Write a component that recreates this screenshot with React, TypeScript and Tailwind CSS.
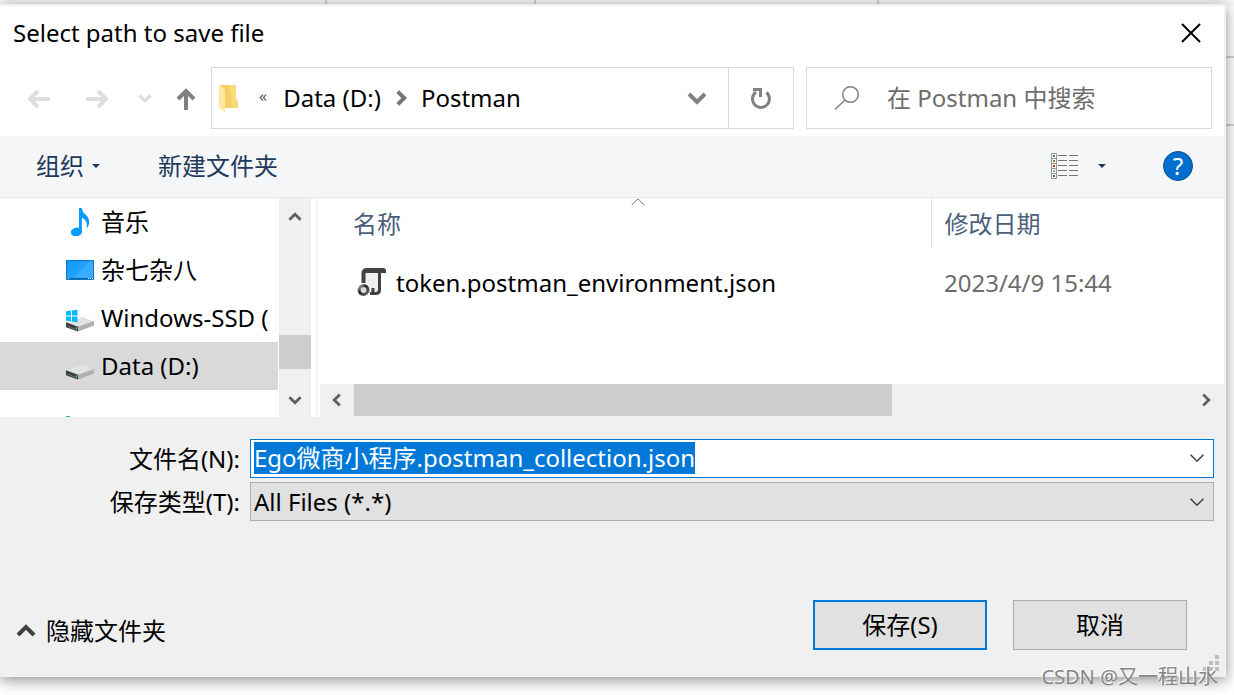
import { useEffect, useRef } from "react";

const places = [
  { name: "音乐", icon: <MusicIcon /> },
  { name: "杂七杂八", icon: <DesktopIcon /> },
  { name: "Windows-SSD (", icon: <DriveIcon system /> },
  { name: "Data (D:)", icon: <DriveIcon />, active: true },
];

function MusicIcon() {
  return (
    <svg className="h-7 w-7" viewBox="0 0 28 28" fill="#0a9bfb">
      <ellipse cx="10.500" cy="24" rx="5.700" ry="4.300" transform="rotate(-12 10.500 24)" />
      <path d="M13 0h2.800c.2 3.200 2 5 4.200 7.100 3.600 3.500 4.300 8.300 1.400 12.700l-.9-.4c1.200-4.500-.6-7.900-4.600-9.700v14H13z" />
    </svg>
  );
}

function DesktopIcon() {
  return (
    <svg className="h-7 w-7" viewBox="0 0 28 28">
      <defs>
        <linearGradient id="desk" x1="0" y1="0" x2="1" y2="1">
          <stop offset="0" stopColor="#0e98fb" />
          <stop offset="1" stopColor="#32aaff" />
        </linearGradient>
      </defs>
      <path d="M.5 4.500h27v19H.5z" fill="url(#desk)" stroke="#0877c4" />
      <path d="M7 22 24 5h3v17z" fill="#5abaff" opacity=".35" />
      <path d="M1 22h26v1H1z" fill="#0765a8" />
      <path d="M2 22h1v1H2zM22 22h1v1h-1zM24 22h1v1h-1zM26 22h1v1h-1z" fill="#fff" />
    </svg>
  );
}

function DriveIcon({ system }: { system?: boolean }) {
  return (
    <svg className="h-7 w-7" viewBox="0 0 28 28">
      <path d="M0 18.500 17 13l11 4.500-16 6z" fill="#e1e2e4" />
      <path d="M12 22.800 28 17v4.500l-16 6z" fill="#b0b0b2" />
      <path d="M0 18.300 12 22.800v4.700L0 23.200z" fill="#3a3d3d" />
      <path d="m1 22 10 3.800" stroke="#6c6e6e" strokeWidth="1" />
      <circle cx="10.500" cy="24.300" r="1" fill="#32d03c" />
      {system && (
        <path
          d="M0 7.300 5 6.600V11.500H0zM6 6.500 11.500 5.700V11.500H6zM0 12.500H5V17.300L0 16.700zM6 12.500H11.500V18.200L6 17.400z"
          fill="#00bcf2"
        />
      )}
    </svg>
  );
}

function JsonIcon() {
  return (
    <svg className="h-8 w-8" viewBox="0 0 32 32" fill="none">
      <defs>
        <linearGradient id="gear" x1="0" y1="0" x2="1" y2="1">
          <stop offset="0" stopColor="#b5b5b5" />
          <stop offset=".4" stopColor="#222" />
          <stop offset="1" stopColor="#6b6b6b" />
        </linearGradient>
      </defs>
      <path d="M8 4h15v22H8z" fill="#efeff0" />
      <path d="M6.500 16V6.500Q6.500 3 10 3h14" stroke="#414141" strokeWidth="4" />
      <path d="M9 1h17q3 0 3 3v2H9z" fill="#414141" />
      <path d="M22.500 5v18q0 3.500-4 3.500h-4M16 21v3.500q0 2-3 2" stroke="#414141" strokeWidth="3" />
      <circle cx="6.500" cy="23" r="4.500" fill="#d8d8d8" stroke="url(#gear)" strokeWidth="3" />
    </svg>
  );
}

function Chevron({ className, d, width = 3 }: { className: string; d: string; width?: number }) {
  return (
    <svg className={className} viewBox="0 0 20 20" fill="none" stroke="currentColor" strokeWidth={width}>
      <path d={d} />
    </svg>
  );
}

const DOWN = "m2 6 8 8 8-8";
const UP = "m2 14 8-8 8 8";
const LEFT = "m14 2-8 8 8 8";
const RIGHT = "m6 2 8 8-8 8";

function NavigationBar() {
  return (
    <nav className="flex h-[62px] items-stretch pr-3">
      <div className="flex w-[211px] shrink-0 items-center text-[#dedede]">
        <button type="button" aria-label="Back" className="ml-7 w-[58px]" disabled>
          <svg className="h-[22px] w-[22px]" viewBox="0 0 22 22" fill="none" stroke="currentColor" strokeWidth="4">
            <path d="M22 12H3M10 4l-8 8 8 8" />
          </svg>
        </button>
        <button type="button" aria-label="Forward" className="w-[52px]" disabled>
          <svg className="h-[22px] w-[22px]" viewBox="0 0 22 22" fill="none" stroke="currentColor" strokeWidth="4">
            <path d="M0 12h19M12 4l8 8-8 8" />
          </svg>
        </button>
        <button type="button" aria-label="Recent locations" className="w-[38px]" disabled>
          <Chevron className="h-[14px] w-[14px]" d={DOWN} width={5} />
        </button>
        <button type="button" aria-label="Up" className="text-[#808080]">
          <svg className="h-6 w-5" viewBox="0 0 20 24" fill="none" stroke="currentColor" strokeWidth="4">
            <path d="M10 24V5M2 13l8-8 8 8" />
          </svg>
        </button>
      </div>

      <div className="flex min-w-0 flex-1 items-stretch border border-[#d9d9d9]">
        <div className="flex min-w-0 flex-1 items-center">
          <svg className="ml-[7px] h-7 w-5 shrink-0" viewBox="0 0 20 28">
            <path d="M1 1h16v14l2 2v7H6z" fill="#f6cf67" />
            <path d="M11 1h6v14l2 2v7h-6z" fill="#fadb7c" />
            <path d="m0 1 6 5v22l-6-4z" fill="#ffe8a2" />
          </svg>
          <button type="button" aria-label="Parent folders" className="ml-5 pb-1 text-base text-[#555]">
            «
          </button>
          <button type="button" className="ml-4">Data (D:)</button>
          <Chevron className="ml-3 h-4 w-4 shrink-0 text-[#757575]" d={RIGHT} width={5} />
          <button type="button" className="ml-3">Postman</button>
          <button type="button" aria-label="Previous locations" className="mr-[21px] ml-auto text-[#808080]">
            <Chevron className="h-5 w-5" d={DOWN} width={4} />
          </button>
        </div>
        <button
          type="button"
          aria-label="Refresh"
          className="flex w-[65px] items-center justify-center border-l border-[#d9d9d9] text-[#808080]"
        >
          <svg className="h-6 w-6" viewBox="0 0 24 24" fill="none" stroke="currentColor" strokeWidth="3">
            <path d="M17.500 6.500a8.500 8.500 0 1 1-10.500-.5" />
            <path d="M4 2h9v9h-3V5H4z" fill="currentColor" stroke="none" />
          </svg>
        </button>
      </div>

      <label className="ml-3 flex w-[406px] items-center border border-[#d9d9d9] pl-7">
        <svg className="h-6 w-6 shrink-0" viewBox="0 0 24 24" fill="none" stroke="#808080" strokeWidth="1.500">
          <circle cx="15.500" cy="8.500" r="7.800" />
          <path d="M10 14 0 23.500" />
        </svg>
        <input
          type="search"
          aria-label="搜索"
          placeholder="在 Postman 中搜索"
          className="ml-7 min-w-0 flex-1 outline-none placeholder:text-[#6d6d6d]"
        />
      </label>
    </nav>
  );
}

function Toolbar() {
  return (
    <div className="mt-[7px] flex h-[62px] items-center border-b border-[#e8e8e8] bg-[#f4f6f8] pr-[31px] pb-px pl-9 text-[#1e395b]">
      <button type="button" className="flex items-center gap-2">
        组织
        <svg className="h-1 w-2" viewBox="0 0 8 4" fill="currentColor">
          <path d="M0 0h8L4 4z" />
        </svg>
      </button>
      <button type="button" className="ml-[58px]">新建文件夹</button>
      <button type="button" aria-label="Change view" className="ml-auto">
        <svg className="h-7 w-7" viewBox="0 0 28 28">
          <path d="M.5 1.500h5v25h-5zM.5 6.500h5M.5 11.500h5M.5 16.500h5M.5 21.500h5" fill="#fff" stroke="#949494" />
          <path d="M7 3.500h9M18 3.500h9M7 8.500h9M18 8.500h9M7 13.500h9M18 13.500h9M7 18.500h9M18 18.500h9M7 23.500h9M18 23.500h9" stroke="#777" />
          <path d="M2 3h2v2H2z" fill="#3e7187" />
          <path d="M2 8h2v2H2z" fill="#797a36" />
          <path d="M2 13h2v2H2z" fill="#b8321b" />
          <path d="M2 18h2v2H2z" fill="#8fa5a2" />
          <path d="M2 23h2v2H2z" fill="#376a95" />
        </svg>
      </button>
      <button type="button" aria-label="View options" className="ml-[19px]">
        <svg className="h-1 w-2" viewBox="0 0 8 4" fill="currentColor">
          <path d="M0 0h8L4 4z" />
        </svg>
      </button>
      <button
        type="button"
        aria-label="Help"
        className="ml-[57px] flex h-[30px] w-[30px] items-center justify-center rounded-full border border-[#0b4d86] bg-[#006fcf] text-2xl text-white"
      >
        ?
      </button>
    </div>
  );
}

function PlacesPane() {
  return (
    <aside className="flex w-[311px] shrink-0">
      <ul className="min-w-0 flex-1 overflow-hidden">
        {places.map((place) => (
          <li key={place.name} className={place.active ? "bg-[#d9d9d9]" : ""}>
            <button type="button" className="flex h-12 items-center gap-[7px] pl-[66px] whitespace-nowrap">
              <span className="shrink-0">{place.icon}</span>
              {place.name}
            </button>
          </li>
        ))}
        <li className="flex h-[27px] items-end pl-[66px]">
          <span className="h-px w-1 bg-[#3fa3b5]" />
        </li>
      </ul>
      <div className="ml-px flex w-8 flex-col items-center bg-[#f0f0f0] text-[#606060]">
        <button type="button" aria-label="Scroll up" className="flex h-[38px] items-center">
          <Chevron className="h-[14px] w-[14px]" d={UP} width={4} />
        </button>
        <div className="mt-[99px] h-[34px] w-full bg-[#cdcdcd]" />
        <button type="button" aria-label="Scroll down" className="mt-auto flex h-[34px] items-center">
          <Chevron className="h-[14px] w-[14px]" d={DOWN} width={4} />
        </button>
      </div>
    </aside>
  );
}

function FilePane() {
  return (
    <section className="ml-[5px] flex min-w-0 flex-1 flex-col border-l-2 border-[#f5f5f5] pl-0.5">
      <table className="w-full table-fixed text-left">
        <thead>
          <tr className="h-[51px] text-[#4c607a]">
            <th className="relative border-r border-[#e5e5e5] pl-[33px] font-normal">
              名称
              <Chevron className="absolute -top-1 left-[310px] h-4 w-4 text-[#555]" d={UP} width={1} />
            </th>
            <th className="w-[293px] pl-[13px] font-normal">修改日期</th>
          </tr>
        </thead>
        <tbody>
          <tr className="h-[68px]">
            <td className="pl-[37px]">
              <span className="flex items-center gap-[7px]">
                <span className="shrink-0"><JsonIcon /></span>
                token.postman_environment.json
              </span>
            </td>
            <td className="pl-[13px] text-[#6d6d6d]">2023/4/9 15:44</td>
          </tr>
        </tbody>
      </table>
      <div className="mt-auto flex h-[33px] items-center bg-[#f0f0f0] pb-px text-[#606060]">
        <button type="button" aria-label="Scroll left" className="flex w-[34px] justify-center">
          <Chevron className="h-[14px] w-[14px]" d={LEFT} width={4} />
        </button>
        <div className="h-full w-[538px] bg-[#cdcdcd]" />
        <button type="button" aria-label="Scroll right" className="ml-auto flex w-9 justify-center">
          <Chevron className="h-[14px] w-[14px]" d={RIGHT} width={4} />
        </button>
      </div>
    </section>
  );
}

function SaveForm() {
  const nameRef = useRef<HTMLInputElement>(null);

  useEffect(() => {
    nameRef.current?.focus();
    nameRef.current?.select();
  }, []);

  return (
    <form className="bg-[#f0f0f0] pt-[22px]" onSubmit={(event) => event.preventDefault()}>
      <div className="grid grid-cols-[240px_1fr] items-center gap-x-[10px] gap-y-1 pr-[10px]">
        <label htmlFor="file-name" className="text-right">文件名(N):</label>
        <div className="flex h-[39px] items-center border border-[#0078d7] bg-white pr-2 pb-px pl-[3px]">
          <input
            id="file-name"
            ref={nameRef}
            type="text"
            defaultValue="Ego微商小程序.postman_collection.json"
            className="h-8 min-w-0 flex-1 leading-8 outline-none selection:bg-[#0078d7] selection:text-white"
          />
          <Chevron className="h-4 w-4 text-[#444]" d={DOWN} width={2} />
        </div>
        <label htmlFor="file-type" className="text-right">保存类型(T):</label>
        <div className="flex h-[39px] items-center border border-[#adadad] bg-[#e1e1e1] pr-2 pl-[3px]">
          <select id="file-type" className="min-w-0 flex-1 appearance-none outline-none">
            <option>All Files (*.*)</option>
          </select>
          <Chevron className="h-4 w-4 text-[#444]" d={DOWN} width={2} />
        </div>
      </div>

      <div className="mt-[79px] flex items-center pr-[37px] pb-[27px] pl-4">
        <button type="button" className="mt-[11px] flex items-center gap-[10px]">
          <Chevron className="h-5 w-5 text-[#404040]" d={UP} width={4} />
          隐藏文件夹
        </button>
        <button type="submit" className="ml-auto h-[50px] w-[174px] border-2 border-[#0078d7] bg-[#e1e1e1]">
          保存(S)
        </button>
        <button type="button" className="ml-[26px] h-[50px] w-[174px] border border-[#adadad] bg-[#e1e1e1]">
          取消
        </button>
      </div>
    </form>
  );
}

// Edges of the sheet that stays visible behind the dialog
function Backdrop() {
  return (
    <div aria-hidden="true" className="absolute inset-0">
      <div className="flex h-1.5 bg-[#f7f7f7]">
        <div className="w-[327px] border-r-2 border-[#d0d0d0]" />
        <div className="w-[209px] border-r-2 border-[#d0d0d0]" />
        <div className="w-[343px] border-r-2 border-[#d0d0d0]" />
      </div>
      <div className="ml-auto h-[52px] w-2 border-b-2 border-[#d0d0d0]" />
      <div className="ml-auto h-[68px] w-2 border-b-2 border-[#d0d0d0]" />
    </div>
  );
}

export default function App() {
  return (
    <main className="relative min-h-screen overflow-hidden bg-white pt-1 pr-2 pb-[18px] font-['Noto_Sans','Noto_Sans_CJK_SC',sans-serif] text-2xl text-black">
      <Backdrop />
      <div role="dialog" aria-labelledby="dialog-title" className="relative border-t-2 border-r-2 border-[#f0f0f0] bg-white shadow-[0_3px_14px_0px_rgba(0,0,0,0.45)]">
        <header className="flex h-[61px] items-center justify-between pr-[23px] pb-2 pl-[13px]">
          <h1 id="dialog-title">Select path to save file</h1>
          <button type="button" aria-label="Close">
            <svg className="h-5 w-5" viewBox="0 0 20 20" stroke="#000" strokeWidth="2">
              <path d="m1 1 18 18M19 1 1 19" />
            </svg>
          </button>
        </header>
        <NavigationBar />
        <Toolbar />
        <div className="flex h-[219px]">
          <PlacesPane />
          <FilePane />
        </div>
        <SaveForm />
        <svg className="absolute right-[5px] bottom-[6px] h-4 w-4" viewBox="0 0 16 16" fill="#bfbfbf">
          <path d="M12 0h4v4h-4zM6 6h4v4H6zM12 6h4v4h-4zM0 12h4v4H0zM6 12h4v4H6zM12 12h4v4h-4z" />
        </svg>
      </div>
      <p className="absolute right-4 bottom-1 text-xl text-[#858585] [text-shadow:-1px_-1px_0_#fff]">CSDN @又一程山水</p>
    </main>
  );
}
